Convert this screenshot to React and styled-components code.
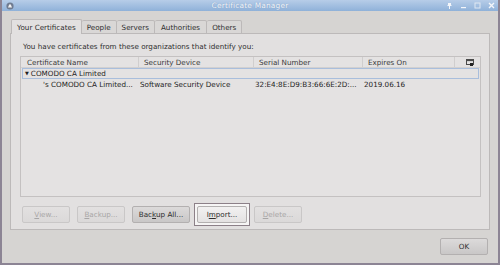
import React from 'react';
import styled, { createGlobalStyle } from 'styled-components';

const Global = createGlobalStyle`
  html, body {
    margin: 0;
    padding: 0;
    width: 500px;
    height: 265px;
    overflow: hidden;
    background: #d6d4d2;
  }
  * { box-sizing: border-box; }
`;

const Window = styled.div`
  width: 500px;
  height: 265px;
  display: flex;
  flex-direction: column;
  font-family: 'DejaVu Sans', sans-serif;
  font-size: 7.2px;
  color: #2e2e2e;
  background: #d6d4d2;
  border-left: 2px solid #8c8494;
  border-right: 2px solid #8c8494;
  border-bottom: 2px solid #8c8494;
`;

const TitleBar = styled.div`
  height: 11px;
  display: flex;
  align-items: center;
  justify-content: space-between;
  padding: 0 3px 0 4px;
  background: linear-gradient(#b7cde8, #8fb1d9);
  color: #f4f6fa;
  font-size: 7.4px;
  position: relative;
`;

const Title = styled.div`
  position: absolute;
  left: 0;
  right: 0;
  text-align: center;
  letter-spacing: 0.2px;
  text-shadow: 0 0 1px #6d8fb8;
`;

const Controls = styled.div`
  display: flex;
  gap: 7px;
  align-items: center;
`;

const Body = styled.div`
  flex: 1;
  display: flex;
  flex-direction: column;
  padding: 8px 8px 0 8px;
`;

const Tabs = styled.div`
  display: flex;
  height: 15px;
  padding-left: 1px;
  position: relative;
  z-index: 1;
`;

const Tab = styled.div`
  height: ${p => (p.$active ? '15px' : '14px')};
  margin-top: ${p => (p.$active ? '0' : '1px')};
  padding: 0 ${p => p.$pad}px;
  display: flex;
  align-items: center;
  background: ${p => (p.$active ? '#e2e0e0' : '#d9d7d6')};
  border: 1px solid #bcb9b9;
  border-bottom: ${p => (p.$active ? 'none' : '1px solid #bcb9b9')};
  border-left: ${p => (p.$first ? '1px solid #bcb9b9' : 'none')};
  border-radius: 2px 2px 0 0;
`;

const Panel = styled.div`
  height: 197px;
  margin-top: -1px;
  background: #e2e0e0;
  border: 1px solid #bcb9b9;
  padding: 6px 8px 0 9px;
  display: flex;
  flex-direction: column;
`;

const Intro = styled.div`
  height: 13px;
  padding-left: 3px;
  display: flex;
  align-items: center;
`;

const Table = styled.div`
  margin-top: 3px;
  height: 141px;
  border: 1px solid #c4c1c1;
  background: #e4e2e2;
  display: flex;
  flex-direction: column;
`;

const Header = styled.div`
  display: grid;
  grid-template-columns: 117px 115px 109px 92px 1fr;
  height: 11px;
  border-bottom: 1px solid #d2d0d0;
`;

const HeadCell = styled.div`
  padding-left: ${p => (p.$first ? 6 : 5)}px;
  display: flex;
  align-items: center;
  justify-content: ${p => (p.$center ? 'center' : 'flex-start')};
  border-left: ${p => (p.$first ? 'none' : '1px solid #d0cece')};
  color: #3a3a3a;
`;

const Row = styled.div`
  display: grid;
  grid-template-columns: 117px 115px 109px 92px 1fr;
  height: 11px;
  align-items: center;
  border: 1px solid ${p => (p.$focus ? '#a9bedc' : 'transparent')};
  margin: 0 1px;
`;

const Cell = styled.div`
  padding-left: ${p => p.$indent || 0}px;
  white-space: nowrap;
  overflow: hidden;
  color: #1e1e1e;
`;

const Arrow = styled.span`
  display: inline-block;
  font-size: 5px;
  margin: 0 2px 0 0;
  vertical-align: 1px;
`;

const Actions = styled.div`
  display: flex;
  gap: 7px;
  margin-top: 6px;
  padding-left: 2px;
  align-items: center;
`;

const Button = styled.div`
  width: ${p => p.$w}px;
  height: 17px;
  display: flex;
  align-items: center;
  justify-content: center;
  border: 1px solid ${p => (p.$disabled ? '#c9c7c7' : '#b3b0b0')};
  border-radius: 2px;
  background: ${p =>
    p.$disabled
      ? 'linear-gradient(#e2e0e0, #dbd9d9)'
      : p.$light
      ? 'linear-gradient(#f2f1f1, #e4e2e2)'
      : 'linear-gradient(#dcdada, #c9c7c7)'};
  color: ${p => (p.$disabled ? '#a8a6a6' : '#2e2e2e')};
  u { text-decoration: underline; text-underline-offset: 1px; }
`;

const FocusRing = styled.div`
  padding: 2px;
  border: 1px solid #8c8088;
  background: #f6f5f5;
  margin: 0 -3px;
`;

const Footer = styled.div`
  flex: 1;
  display: flex;
  justify-content: flex-end;
  align-items: center;
  padding: 0 2px 1px 0;
`;

function Pin() {
  return (
    <svg width="7" height="7" viewBox="0 0 7 7">
      <path d="M2 1h3v2l1 1H1l1-1z M3 4h1v3H3z" fill="#f4f6fa" />
    </svg>
  );
}

function Minimize() {
  return (
    <svg width="7" height="7" viewBox="0 0 7 7">
      <rect x="1" y="5" width="5" height="1.2" fill="#f4f6fa" />
    </svg>
  );
}

function Maximize() {
  return (
    <svg width="7" height="7" viewBox="0 0 7 7">
      <rect x="1" y="1" width="5" height="5" fill="none" stroke="#dfe7f2" strokeWidth="1" />
    </svg>
  );
}

function Close() {
  return (
    <svg width="7" height="7" viewBox="0 0 7 7">
      <path d="M1 1l5 5M6 1l-5 5" stroke="#f4f6fa" strokeWidth="1.4" />
    </svg>
  );
}

function AppIcon() {
  return (
    <svg width="8" height="8" viewBox="0 0 8 8">
      <circle cx="4" cy="4" r="3.6" fill="#6f7b90" />
      <path d="M2 5.5h4L5 3 4 2 3 3z" fill="#f2f2f2" />
    </svg>
  );
}

function ColumnPicker() {
  return (
    <svg width="8" height="7" viewBox="0 0 8 7">
      <rect x="0.5" y="0.5" width="7" height="5" fill="none" stroke="#4a4a4a" />
      <rect x="0.5" y="0.5" width="7" height="1.6" fill="#4a4a4a" />
      <rect x="4" y="4" width="3" height="3" fill="#222" />
    </svg>
  );
}

export default function App() {
  return (
    <>
      <Global />
      <Window>
        <TitleBar>
          <AppIcon />
          <Title>Certificate Manager</Title>
          <Controls>
            <Pin />
            <Minimize />
            <Maximize />
            <Close />
          </Controls>
        </TitleBar>
        <Body>
          <Tabs>
            <Tab $active $first $pad={5}>Your Certificates</Tab>
            <Tab $pad={5}>People</Tab>
            <Tab $pad={5}>Servers</Tab>
            <Tab $pad={6}>Authorities</Tab>
            <Tab $pad={5}>Others</Tab>
          </Tabs>
          <Panel>
            <Intro>You have certificates from these organizations that identify you:</Intro>
            <Table>
              <Header>
                <HeadCell $first>Certificate Name</HeadCell>
                <HeadCell>Security Device</HeadCell>
                <HeadCell>Serial Number</HeadCell>
                <HeadCell>Expires On</HeadCell>
                <HeadCell $center><ColumnPicker /></HeadCell>
              </Header>
              <Row $focus>
                <Cell $indent={2}><Arrow>▼</Arrow>COMODO CA Limited</Cell>
              </Row>
              <Row>
                <Cell $indent={20}>'s COMODO CA Limited...</Cell>
                <Cell>Software Security Device</Cell>
                <Cell>32:E4:8E:D9:B3:66:6E:2D:...</Cell>
                <Cell>2019.06.16</Cell>
              </Row>
            </Table>
            <Actions>
              <Button $w={48} $disabled><span><u>V</u>iew...</span></Button>
              <Button $w={48} $disabled><span><u>B</u>ackup...</span></Button>
              <Button $w={58}><span>Bac<u>k</u>up All...</span></Button>
              <FocusRing>
                <Button $w={50} $light><span>I<u>m</u>port...</span></Button>
              </FocusRing>
              <Button $w={48} $disabled><span><u>D</u>elete...</span></Button>
            </Actions>
          </Panel>
          <Footer>
            <Button $w={48}>OK</Button>
          </Footer>
        </Body>
      </Window>
    </>
  );
}
